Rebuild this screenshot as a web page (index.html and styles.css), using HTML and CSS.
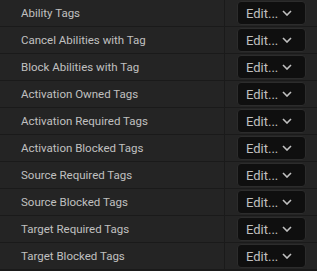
FILE: index.html
```html
<!DOCTYPE html>
<html lang="en">
<head>
    <meta charset="UTF-8">
    <title>Tag Properties</title>
    <link rel="stylesheet" href="styles.css">
</head>
<body>
    <div class="panel">
        <div class="row"><div class="name">Ability Tags</div><div class="value"><button class="edit">Edit... <svg class="chev" width="10" height="6" viewBox="0 0 10 6"><polyline points="1,1 5,5 9,1" /></svg></button></div></div>
        <div class="row"><div class="name">Cancel Abilities with Tag</div><div class="value"><button class="edit">Edit... <svg class="chev" width="10" height="6" viewBox="0 0 10 6"><polyline points="1,1 5,5 9,1" /></svg></button></div></div>
        <div class="row"><div class="name">Block Abilities with Tag</div><div class="value"><button class="edit">Edit... <svg class="chev" width="10" height="6" viewBox="0 0 10 6"><polyline points="1,1 5,5 9,1" /></svg></button></div></div>
        <div class="row"><div class="name">Activation Owned Tags</div><div class="value"><button class="edit">Edit... <svg class="chev" width="10" height="6" viewBox="0 0 10 6"><polyline points="1,1 5,5 9,1" /></svg></button></div></div>
        <div class="row"><div class="name">Activation Required Tags</div><div class="value"><button class="edit">Edit... <svg class="chev" width="10" height="6" viewBox="0 0 10 6"><polyline points="1,1 5,5 9,1" /></svg></button></div></div>
        <div class="row"><div class="name">Activation Blocked Tags</div><div class="value"><button class="edit">Edit... <svg class="chev" width="10" height="6" viewBox="0 0 10 6"><polyline points="1,1 5,5 9,1" /></svg></button></div></div>
        <div class="row"><div class="name">Source Required Tags</div><div class="value"><button class="edit">Edit... <svg class="chev" width="10" height="6" viewBox="0 0 10 6"><polyline points="1,1 5,5 9,1" /></svg></button></div></div>
        <div class="row"><div class="name">Source Blocked Tags</div><div class="value"><button class="edit">Edit... <svg class="chev" width="10" height="6" viewBox="0 0 10 6"><polyline points="1,1 5,5 9,1" /></svg></button></div></div>
        <div class="row"><div class="name">Target Required Tags</div><div class="value"><button class="edit">Edit... <svg class="chev" width="10" height="6" viewBox="0 0 10 6"><polyline points="1,1 5,5 9,1" /></svg></button></div></div>
        <div class="row"><div class="name">Target Blocked Tags</div><div class="value"><button class="edit">Edit... <svg class="chev" width="10" height="6" viewBox="0 0 10 6"><polyline points="1,1 5,5 9,1" /></svg></button></div></div>
    </div>
</body>
</html>
```

FILE: styles.css
```css
body { margin: 0; background-color: #1a1a1a; font-family: Roboto, "Noto Sans", sans-serif; }
.panel { display: flex; flex-direction: column; gap: 1px; }
.row { display: flex; height: 26px; background-color: #242424; }
.name { width: 225px; padding-left: 21px; box-sizing: border-box; display: flex; align-items: center; color: #c0c0c0; font-size: 11.5px; border-right: 1px solid #1a1a1a; }
.value { flex: 1; display: flex; align-items: center; padding-left: 12px; }
.edit { width: 69px; height: 24px; background-color: #0f0f0f; border: 1px solid #2c2c2c; border-radius: 4px; color: #c0c0c0; font-family: inherit; font-size: 13px; padding: 0 0 0 8px; display: flex; align-items: center; gap: 4px; }
.chev { fill: none; stroke: #c0c0c0; stroke-width: 1.6; }
```
